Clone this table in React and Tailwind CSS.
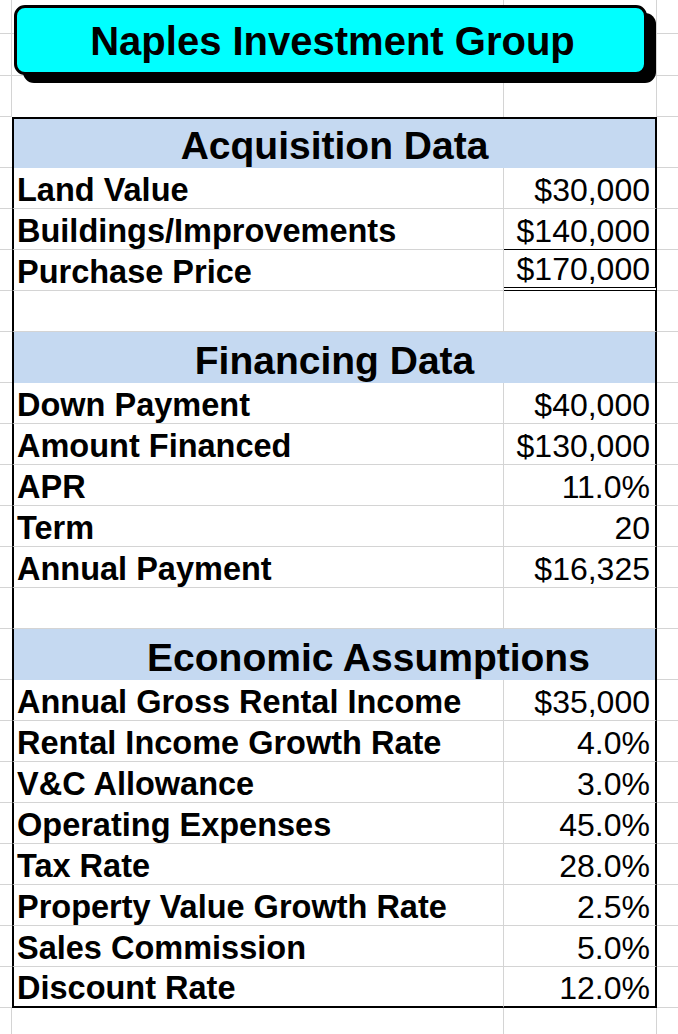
const sections = [
  {
    title: "Acquisition Data",
    rows: [
      { label: "Land Value", value: "$30,000" },
      { label: "Buildings/Improvements", value: "$140,000", mark: "sub" },
      { label: "Purchase Price", value: "$170,000", mark: "total" },
    ],
  },
  {
    title: "Financing Data",
    rows: [
      { label: "Down Payment", value: "$40,000" },
      { label: "Amount Financed", value: "$130,000" },
      { label: "APR", value: "11.0%" },
      { label: "Term", value: "20" },
      { label: "Annual Payment", value: "$16,325" },
    ],
  },
  {
    title: "Economic Assumptions",
    shifted: true,
    rows: [
      { label: "Annual Gross Rental Income", value: "$35,000" },
      { label: "Rental Income Growth Rate", value: "4.0%" },
      { label: "V&C Allowance", value: "3.0%" },
      { label: "Operating Expenses", value: "45.0%" },
      { label: "Tax Rate", value: "28.0%" },
      { label: "Property Value Growth Rate", value: "2.5%" },
      { label: "Sales Commission", value: "5.0%" },
      { label: "Discount Rate", value: "12.0%" },
    ],
  },
];

function PlainRow({ height, openBottom }) {
  return (
    <div className={`grid grid-cols-[12px_492px_153px_1fr] ${height}`}>
      <div className="border-r border-b border-[#d4d4d4]" />
      <div
        className={
          openBottom
            ? "border-r border-[#d4d4d4]"
            : "border-r border-b border-[#d4d4d4]"
        }
      />
      <div
        className={
          openBottom
            ? "border-r border-[#d4d4d4]"
            : "border-r border-b border-[#d4d4d4]"
        }
      />
      <div className="border-b border-[#d4d4d4]" />
    </div>
  );
}

function HeaderRow({ title, first, shifted }) {
  return (
    <div className="grid h-[51px] grid-cols-[12px_645px_1fr]">
      <div className="border-b border-[#d4d4d4]" />
      <div
        className={`flex items-end justify-center border-x-2 border-black bg-[#c5d9f1] pb-[3px] text-[39px] font-bold leading-[39px] whitespace-nowrap ${
          first ? "border-t-2" : ""
        } ${shifted ? "pl-[68px]" : ""}`}
      >
        {title}
      </div>
      <div className="border-b border-[#d4d4d4]" />
    </div>
  );
}

function DataRow({ label, value, mark, last }) {
  let labelBottom = "border-b border-b-[#d4d4d4]";
  let valueBottom = "border-b border-b-[#d4d4d4]";
  if (last) {
    labelBottom = "border-b-2 border-b-black";
    valueBottom = "border-b-2 border-b-black";
  } else if (mark === "sub") {
    valueBottom = "border-b border-b-black";
  } else if (mark === "total") {
    valueBottom = "border-b-[4px] border-b-black [border-bottom-style:double]";
  }

  return (
    <div className="grid h-[41px] grid-cols-[12px_492px_153px_1fr]">
      <div className="border-b border-[#d4d4d4]" />
      <div
        className={`flex items-end border-l-2 border-r border-l-black border-r-[#d4d4d4] pb-[2px] pl-[3px] text-[32.5px] font-bold leading-[32px] whitespace-nowrap ${labelBottom}`}
      >
        {label}
      </div>
      <div
        className={`flex items-end justify-end border-r-2 border-r-black pb-[2px] pr-[5px] text-[32px] leading-[32px] ${valueBottom}`}
      >
        {value}
      </div>
      <div className="border-b border-[#d4d4d4]" />
    </div>
  );
}

export default function App() {
  return (
    <div className="h-screen overflow-hidden bg-white font-['Liberation_Sans',Arial,sans-serif] text-black">
      <div className="relative">
        <PlainRow height="h-[34px]" />
        <PlainRow height="h-[42px]" />
        <PlainRow height="h-[41px]" openBottom />

        <div className="absolute left-[14px] top-[5px] flex h-[70px] w-[633px] items-center justify-center rounded-[11px] border-[3px] border-black bg-[#00ffff] pt-[2px] pl-[4px] shadow-[9px_8px_0_0_#000]">
          <span className="text-[40px] font-bold leading-[40px]">
            Naples Investment Group
          </span>
        </div>
      </div>

      {sections.map((section, si) => (
        <div key={section.title}>
          <HeaderRow
            title={section.title}
            first={si === 0}
            shifted={section.shifted}
          />
          {section.rows.map((row, ri) => (
            <DataRow
              key={row.label}
              {...row}
              last={si === sections.length - 1 && ri === section.rows.length - 1}
            />
          ))}
          {si < sections.length - 1 && <DataRow label="" value="" />}
        </div>
      ))}

      <PlainRow height="h-[41px]" />
    </div>
  );
}
